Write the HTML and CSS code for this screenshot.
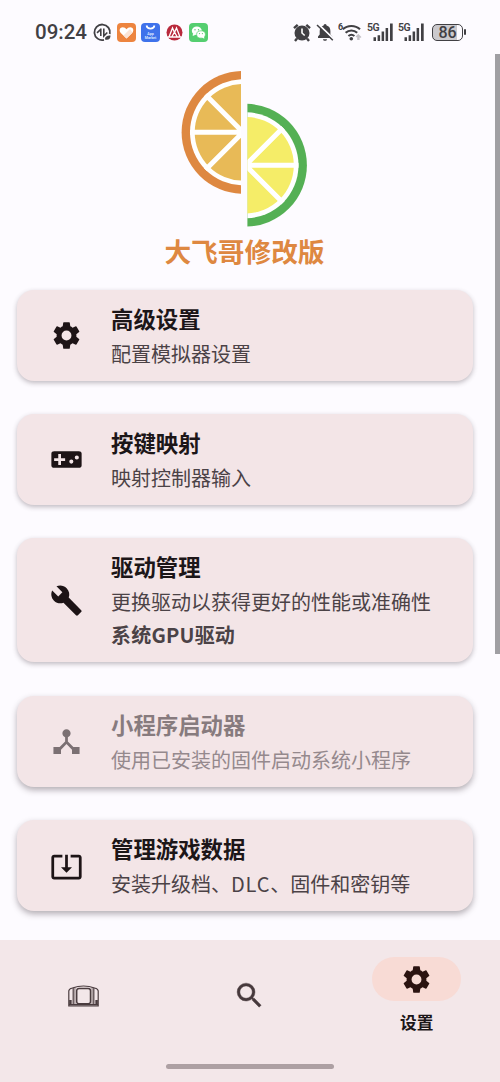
FILE: index.html
```html
<!DOCTYPE html>
<html lang="zh-CN">
<head>
<meta charset="utf-8">
<title>设置</title>
<link rel="stylesheet" href="styles.css">
</head>
<body>
<svg class="defs" width="0" height="0">
  <symbol id="gear" viewBox="0 0 24 24"><path d="M19.14 12.94c.04-.3.06-.61.06-.94 0-.32-.02-.64-.07-.94l2.03-1.58a.49.49 0 0 0 .12-.61l-1.92-3.32a.49.49 0 0 0-.59-.22l-2.39.96a7 7 0 0 0-1.62-.94l-.36-2.54a.48.48 0 0 0-.48-.41h-3.84a.47.47 0 0 0-.47.41l-.36 2.54c-.59.24-1.13.57-1.62.94l-2.39-.96a.48.48 0 0 0-.59.22L2.74 8.87a.47.47 0 0 0 .12.61l2.03 1.58c-.05.3-.09.63-.09.94s.02.64.07.94l-2.03 1.58a.49.49 0 0 0-.12.61l1.92 3.32c.12.22.37.29.59.22l2.39-.96c.5.38 1.03.7 1.62.94l.36 2.54c.05.24.24.41.48.41h3.84c.24 0 .44-.17.47-.41l.36-2.54a7 7 0 0 0 1.62-.94l2.39.96c.22.08.47 0 .59-.22l1.92-3.32a.47.47 0 0 0-.12-.61zM12 15.6a3.6 3.6 0 1 1 0-7.2 3.6 3.6 0 0 1 0 7.2z"/></symbol>
  <symbol id="signal" viewBox="0 0 27 19"><path d="M6.5 14.2h2.5V18H6.5zM10.6 12.2h2.5V18h-2.5zM14.6 8.6h2.5V18h-2.5zM18.6 5h2.5v13h-2.5zM23 .5h2.7V18H23z"/></symbol>
</svg>
<div class="screen">
  <header class="status">
    <div class="status-left">
      <span class="clock">09:24</span>
      <svg width="19" height="19" viewBox="0 0 19 19" fill="none" stroke="#414044" stroke-width="1.8"><path d="M16.8 11A7.8 7.8 0 1 0 11 16.9"/><path d="M7.800 5.500v7.500M4 9.800l3.800-3.500M10.800 5.500v7.500l3.500-3.500" stroke-width="1.6"/><path d="M12 16.5c0-3 2-4 5.5-4 0 3.4-2 5-5.5 4z" fill="#414044" stroke="none"/></svg>
      <svg width="19" height="19" viewBox="0 0 19 19"><rect width="19" height="19" rx="4" fill="#ed843f"/><path d="M9.500 15.500 3.800 10C1.500 7.200 3 4.200 5.700 4.200c1.700 0 2.900.8 3.800 2 1-1.200 2.100-2 3.800-2 2.700 0 4.200 3 1.900 5.800z" fill="#fff"/><path d="m9.500 15.500-3-2.900 6.500-6.500 2.500 3.500z" fill="#fbe4d6"/></svg>
      <svg width="19" height="19" viewBox="0 0 19 19"><rect width="19" height="19" rx="4" fill="#3f72eb"/><path d="M5.500 2.500c.7 4.200 7.300 4.200 8 0" fill="none" stroke="#fff" stroke-width="1.6"/><text x="9.500" y="12.300" class="app-text">App</text><text x="9.500" y="16" class="app-text">Market</text></svg>
      <svg width="19" height="19" viewBox="0 0 19 19"><circle cx="9.500" cy="9.500" r="8" fill="#b9293c"/><path d="M4.200 13.500 7.500 5l2 4.500 2-4.500 3.300 8.500M7 13.500 9.500 9l2.500 4.500M2.500 14h14" fill="none" stroke="#fff" stroke-width="1.3"/></svg>
      <svg width="19" height="19" viewBox="0 0 19 19"><rect width="19" height="19" rx="4" fill="#55ce70"/><ellipse cx="7.800" cy="7.800" rx="5" ry="4.300" fill="#fff"/><path d="m4 10-.3 3 3-1.200z" fill="#fff"/><ellipse cx="12" cy="11.500" rx="4.400" ry="3.700" fill="#fff" stroke="#55ce70" stroke-width=".7"/><path d="m13 14.500 2.300 1.300-.3-2.500z" fill="#fff"/><g fill="#55ce70"><circle cx="6" cy="6.800" r=".7"/><circle cx="9.500" cy="6.800" r=".7"/><circle cx="10.500" cy="10.600" r=".6"/><circle cx="13.400" cy="10.600" r=".6"/></g></svg>
    </div>
    <div class="status-right">
      <svg width="18" height="19" viewBox="0 0 18 19"><circle cx="9" cy="10" r="7.500" fill="#414044"/><path d="M1 5.200 4.700 1.800M17 5.200l-3.700-3.400M4 15.500 2 18M14 15.500l2 2.500" stroke="#414044" stroke-width="2.4"/><path d="M9 5.500V10l2.700 2.500" stroke="#fff" stroke-width="1.6" fill="none"/></svg>
      <svg class="bell" width="18" height="19" viewBox="0 0 18 19"><path d="M2 15v-1.500l1.700-2V8c0-3 1.500-4.800 3.900-5.400a1.500 1.500 0 0 1 3 0C13 3.200 14.400 5 14.400 8v3.500l1.800 2V15zM7 16.200h4c0 2.200-4 2.200-4 0z" fill="#414044"/><path d="m2.500 1.500 15 14.500" stroke="#fdfbff" stroke-width="2"/><path d="m1 2 15.800 15.200" stroke="#414044" stroke-width="1.5"/></svg>
      <svg class="wifi" width="25" height="20" viewBox="0 0 25 20"><text x="0" y="8" class="net-text">6</text><g fill="none" stroke="#414044" stroke-width="2.1"><path d="M4.800 7.300c4.700-4.500 12.500-4.500 17.200 0M7.600 10.800c3.300-3 8.300-3 11.600 0M10.400 14c1.800-1.500 4.200-1.500 6 0"/></g><circle cx="13.300" cy="16.700" r="1.800" fill="#414044"/><path d="m18 15 1.800-1.800V18M21 18v-4.500l2 2" fill="none" stroke="#c5c2c7" stroke-width="1.2"/></svg>
      <div class="cell"><span>5G</span><svg width="27" height="19"><use href="#signal"/></svg></div>
      <div class="cell"><span>5G</span><svg width="27" height="19"><use href="#signal"/></svg></div>
      <div class="battery"><span>86</span></div><i class="battery-tip"></i>
    </div>
  </header>

  <main class="content">
    <section class="brand">
      <svg width="128" height="158" viewBox="180 70 128 158">
        <clipPath id="left"><path d="M180 70h61v158h-61z"/></clipPath>
        <clipPath id="right"><path d="M247.400 70H308v158h-60.600z"/></clipPath>
        <g clip-path="url(#left)"><circle cx="243" cy="132.300" r="61.400" fill="#de8841"/><circle cx="243" cy="132.300" r="53" fill="#fff"/><circle cx="243" cy="132.300" r="48.300" fill="#e8ba57"/><path d="M243 132.300h-53M243 132.300l-37.500-37.500M243 132.300l-37.500 37.500" stroke="#fff" stroke-width="5"/></g>
        <g clip-path="url(#right)"><circle cx="245.500" cy="165.200" r="61.400" fill="#54b054"/><circle cx="245.500" cy="165.200" r="53" fill="#fff"/><circle cx="245.500" cy="165.200" r="48.300" fill="#f5ed68"/><path d="M245.500 165.200h53M245.500 165.200l37.500-37.500M245.500 165.200l37.500 37.500" stroke="#fff" stroke-width="5"/></g>
      </svg>
      <h1>大飞哥修改版</h1>
    </section>

    <section class="cards">
      <article class="card">
        <svg class="icon"><use href="#gear"/></svg>
        <div><h2>高级设置</h2><p>配置模拟器设置</p></div>
      </article>
      <article class="card">
        <svg class="icon" viewBox="0 0 24 24"><path d="M21 6H3c-1.100 0-2 .6-2 1.700v8.600C1 17.400 1.900 18 3 18h18c1.100 0 2-.6 2-1.700V7.700C23 6.600 22.100 6 21 6zm-10 7H8v3H6v-3H3v-2h3V8h2v3h3zm4.500 2a1.500 1.500 0 1 1 0-3 1.500 1.500 0 0 1 0 3zm4-3a1.500 1.500 0 1 1 0-3 1.500 1.500 0 0 1 0 3z"/></svg>
        <div><h2>按键映射</h2><p>映射控制器输入</p></div>
      </article>
      <article class="card">
        <svg class="icon" viewBox="0 0 24 24"><path d="m22.700 19-9.100-9.100c.9-2.300.4-5-1.500-6.900-2-2-5-2.400-7.400-1.300L9 6 6 9 1.600 4.700C.4 7.100.9 10.100 2.900 12.100c1.900 1.900 4.600 2.400 6.900 1.500l9.100 9.100c.4.4 1 .4 1.400 0l2.300-2.300c.5-.4.5-1.100.1-1.400z"/></svg>
        <div><h2>驱动管理</h2><p>更换驱动以获得更好的性能或准确性</p><p class="strong">系统GPU驱动</p></div>
      </article>
      <article class="card disabled">
        <svg class="icon" viewBox="0 0 24 24"><path d="m17 16-4-4V8.820C14.160 8.400 15 7.300 15 6c0-1.660-1.340-3-3-3S9 4.340 9 6c0 1.300.84 2.400 2 2.820V12l-4 4H2.500v5h5.500v-3.050l4-4.200 4 4.200V21h5.500v-5z"/></svg>
        <div><h2>小程序启动器</h2><p>使用已安装的固件启动系统小程序</p></div>
      </article>
      <article class="card">
        <svg class="icon" viewBox="0 0 24 24"><path d="m12 16.500 4-4h-3v-9h-2v9H8zm9-13h-6v1.990h6v14.030H3V5.490h6V3.500H3c-1.100 0-2 .9-2 2v14c0 1.100.9 2 2 2h18c1.100 0 2-.9 2-2v-14c0-1.100-.9-2-2-2z"/></svg>
        <div><h2>管理游戏数据</h2><p>安装升级档、<span class="latin">DLC</span>、固件和密钥等</p></div>
      </article>
    </section>
  </main>

  <nav class="nav">
    <a class="tab"><svg width="31" height="22" viewBox="0 0 31 22" fill="none" stroke="#4a3c3f" stroke-width="1.2"><path d="M.8 21V6c0-2 1.500-2.500 3.500-3Q15.500-1 26.700 3c2 .5 3.500 1 3.500 3v15zM5.200 3v17M25.800 3v17M1 19.700h29"/><rect x="8.700" y="3.400" width="13.800" height="15.300" rx="2.300" stroke-width="1.5"/><path d="M6.900 2.500V20M24.100 2.500V20" stroke-width=".7"/><path d="M2.400 15v5M28.600 15v5" stroke-width="2.5"/></svg></a>
    <a class="tab"><svg class="icon search" viewBox="0 0 24 24"><path d="M15.500 14h-.79l-.28-.27A6.470 6.470 0 0 0 16 9.500 6.500 6.500 0 1 0 9.500 16c1.610 0 3.090-.59 4.230-1.570l.27.28v.79l5 4.990L20.490 19zm-6 0a4.500 4.500 0 1 1 0-9 4.500 4.500 0 0 1 0 9z"/></svg></a>
    <a class="tab active"><span class="pill"><svg class="icon"><use href="#gear"/></svg></span><span>设置</span></a>
    <i class="home-bar"></i>
  </nav>
  <i class="scrollbar"></i>
</div>
</body>
</html>
```

FILE: styles.css
```css
* { box-sizing: border-box; }
body {
  margin: 0;
  background: #fdfbff;
  color: #1c1618;
  font-family: "Noto Sans CJK SC", sans-serif;
}
h1, h2, p { margin: 0; }
svg { display: block; flex: none; }
.defs { position: absolute; }
.screen {
  position: relative;
  width: 500px;
  height: 1082px;
  display: flex;
  flex-direction: column;
  overflow: hidden;
}

.status {
  height: 64px;
  padding: 0 34px 0 35px;
  display: flex;
  align-items: center;
  justify-content: space-between;
  color: #414044;
  font-family: Roboto, sans-serif;
}
.status-left { display: flex; align-items: center; gap: 5px; }
.clock { width: 53px; font-size: 20.5px; font-weight: 500; line-height: 24px; white-space: nowrap; }
.app-text { font: 700 3.6px Roboto, sans-serif; fill: #dce6ff; text-anchor: middle; }
.status-right { display: flex; align-items: center; }
.bell { margin-left: 5px; }
.wifi { margin-left: 4px; }
.net-text { font: 700 9px Roboto, sans-serif; fill: #414044; }
.cell { position: relative; width: 27px; margin-left: 4px; fill: #414044; }
.cell span { position: absolute; left: 0; top: 0; font-size: 10.5px; line-height: 9px; font-weight: 600; letter-spacing: -.5px; }
.battery {
  width: 31px;
  height: 17px;
  margin-left: 7px;
  border: 1.5px solid #414044;
  border-radius: 5px;
  background: linear-gradient(90deg, #cbc9cd 84%, #fdfbff 84%);
  font-size: 16px;
  font-weight: 500;
  line-height: 15px;
  text-align: center;
}
.battery-tip { width: 2px; height: 6px; margin-left: 1px; background: #414044; border-radius: 1px; }

.content { height: 876px; }
.brand { display: flex; flex-direction: column; align-items: center; padding: 6px 12px 0 0; }
.brand h1 {
  height: 40px;
  margin-top: 3px;
  margin-left: 1px;
  color: #de8841;
  font-size: 26.7px;
  font-weight: 700;
  line-height: 40px;
}
.brand svg { margin-right: 1px; }
.cards { display: flex; flex-direction: column; gap: 33.7px; padding: 19px 27.5px 0 16.5px; }
.card {
  display: flex;
  align-items: center;
  padding: 11px 0 10px 33.5px;
  border-radius: 17px;
  background: #f3e5e7;
  box-shadow: 0 2px 5px rgba(50, 35, 45, .3);
}
.card:nth-child(n+4) { box-shadow: 0 3px 6px rgba(50, 35, 45, .36); }
.icon { width: 33px; height: 33px; fill: #1d1416; }
.card .icon { margin-right: 28px; }
.card h2 { font-size: 22.4px; line-height: 34px; font-weight: 700; }
.card p { padding-top: 4px; font-size: 20px; line-height: 30px; color: #4b4246; height: 35.5px; }
.card .strong { font-weight: 700; letter-spacing: .2px; padding-top: 1px; height: 33.5px; }
.latin { letter-spacing: .8px; }
.disabled h2 { color: #877b7e; }
.disabled p { color: #95898d; }
.disabled .icon { fill: #7b7073; }

.nav {
  position: relative;
  height: 142px;
  display: grid;
  grid-template-columns: repeat(3, 1fr);
  background: #f3e7e9;
}
.tab { display: flex; flex-direction: column; align-items: center; padding-top: 45px; }
.tab .search { margin-top: -6px; fill: #46393c; stroke: #46393c; stroke-width: .3; }
.tab.active { padding-top: 17px; font-size: 16.7px; font-weight: 700; line-height: 24px; }
.pill {
  width: 89px;
  height: 44px;
  margin-bottom: 9px;
  border-radius: 22px;
  display: flex;
  align-items: center;
  justify-content: center;
  background: #f8dbd5;
}
.pill .icon { fill: #2b1310; }
.home-bar {
  position: absolute;
  left: 166px;
  bottom: 13px;
  width: 168px;
  height: 5.5px;
  border-radius: 3px;
  background: #ada0a3;
}
.scrollbar { position: absolute; right: 0; top: 54px; width: 5.5px; height: 600px; background: #a09fa3; }
```
